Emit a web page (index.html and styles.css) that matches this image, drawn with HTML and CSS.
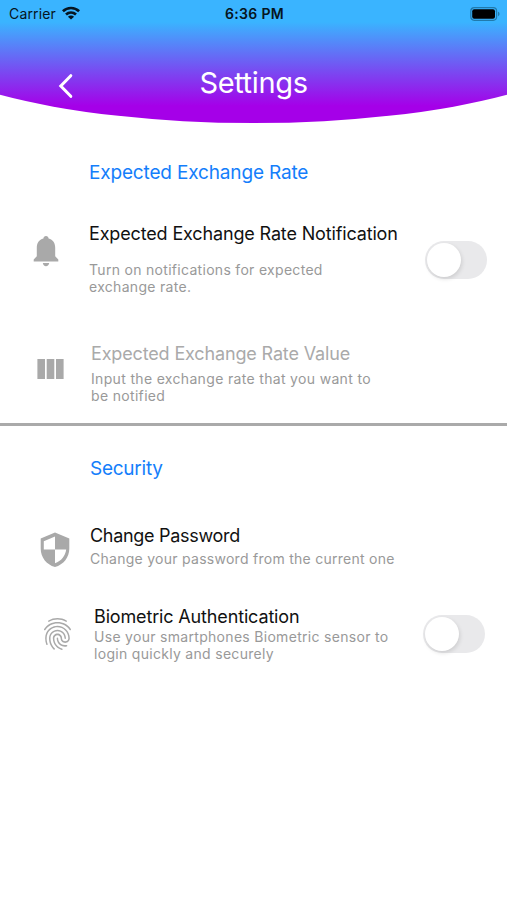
FILE: index.html
```html
<!DOCTYPE html>
<html lang="en">
<head>
<meta charset="utf-8">
<title>Settings</title>
<link rel="stylesheet" href="styles.css">
</head>
<body>
<header class="header">
  <div class="status">
    <div class="carrier"><span class="carrier-name">Carrier</span>
      <svg class="wifi" width="18" height="14" viewBox="0 0 18 14" fill="none" stroke="#061521" stroke-width="2.7"><path d="M.9 5.200C5.400.9 12.600.9 17.100 5.200M4 8.500c2.900-2.600 7.100-2.600 10 0"/><path d="M9 13.500 5.900 10.700c1.700-1.500 4.500-1.500 6.200 0z" fill="#061521" stroke="none"/></svg>
    </div>
    <span class="time">6:36 PM</span>
    <svg class="battery" width="30" height="14" viewBox="0 0 30 14"><rect x=".8" y=".7" width="25.8" height="12.6" rx="3.5" fill="none" stroke="#217aac" stroke-width="1.2"/><rect x="2.2" y="2.200" width="22.800" height="9.600" rx="2" fill="#000"/><path d="M28 4.800c2 .6 2 3.800 0 4.400z" fill="#217aac"/></svg>
  </div>
  <div class="titlebar">
    <svg class="back" width="16" height="26" viewBox="0 0 16 26" fill="none" stroke="#fff" stroke-width="3" stroke-linecap="round" stroke-linejoin="miter"><path d="M13.800 2.700 3.800 13l10 10.300"/></svg>
    <h1 class="title">Settings</h1>
  </div>
</header>
<main>
  <section class="rates">
    <h2 class="heading heading-rates">Expected Exchange Rate</h2>
    <div class="row notify">
      <svg class="icon bell" width="26" height="31" viewBox="0 0 26 31"><path d="M13 0c-1.500 0-2.500 1-2.600 2.500C6 3.600 3.800 7.200 3.800 11.800v8.400L.7 23.400v2.200h24.600v-2.200l-3.100-3.200v-8.400c0-4.600-2.200-8.200-6.600-9.300C15.500 1 14.500 0 13 0zM9.800 27h6.400c-.2 2-1.500 3.200-3.200 3.200S10 29 9.800 27z"/></svg>
      <div class="copy"><h3 class="label">Expected Exchange Rate Notification</h3><p class="sub">Turn on notifications for expected<br>exchange rate.</p></div>
      <span class="toggle"></span>
    </div>
    <div class="row value">
      <svg class="icon columns" width="27" height="20" viewBox="0 0 27 20"><path d="M.4 0h7.600v20H.4zM9.700 0h7.600v20H9.700zM19 0h7.600v20H19z"/></svg>
      <div class="copy"><h3 class="label">Expected Exchange Rate Value</h3><p class="sub">Input the exchange rate that you want to<br>be notified</p></div>
    </div>
  </section>
  <section class="security">
    <h2 class="heading heading-security">Security</h2>
    <div class="row password">
      <svg class="icon shield" width="30" height="36" viewBox="0 0 30 36"><path fill-rule="evenodd" d="M15 .5 29.300 6.500v10.200c0 8.500-5.700 15.800-14.300 18.300C6.400 32.500.700 25.200.700 16.700V6.500zM15 4.500 3.800 9.200v8.300H15zM15 17.500v13.800c6.200-2.200 10.400-7.500 11.200-13.800z"/></svg>
      <div class="copy"><h3 class="label">Change Password</h3><p class="sub">Change your password from the current one</p></div>
    </div>
    <div class="row biometric">
      <svg class="icon finger" width="27" height="32" viewBox="3 2 18 20" preserveAspectRatio="none"><path d="M17.810 4.470c-.080 0-.160-.020-.230-.060C15.660 3.420 14 3 12.010 3c-1.980 0-3.860.470-5.570 1.410-.240.130-.540.040-.680-.200-.130-.240-.040-.550.200-.680C7.820 2.520 9.860 2 12.010 2c2.130 0 3.990.470 6.030 1.520.250.130.340.430.210.670-.090.180-.260.280-.440.280zM3.500 9.720c-.100 0-.200-.030-.290-.090-.230-.160-.280-.470-.120-.700.990-1.400 2.250-2.500 3.750-3.270C9.980 4.040 14 4.030 17.150 5.650c1.500.770 2.760 1.860 3.750 3.250.160.220.110.540-.120.700-.230.160-.540.110-.700-.120-.900-1.260-2.040-2.250-3.390-2.940-2.870-1.470-6.540-1.470-9.400.010-1.360.700-2.500 1.700-3.400 2.960-.080.140-.230.210-.390.210zm6.250 12.070c-.130 0-.260-.050-.350-.150-.870-.870-1.340-1.430-2.010-2.640-.690-1.230-1.050-2.730-1.050-4.340 0-2.970 2.540-5.390 5.660-5.390s5.660 2.420 5.660 5.390c0 .280-.220.500-.500.500s-.500-.220-.500-.500c0-2.420-2.090-4.390-4.660-4.390-2.570 0-4.660 1.970-4.660 4.390 0 1.440.320 2.770.930 3.850.640 1.150 1.080 1.640 1.850 2.420.190.200.190.510 0 .710-.110.100-.240.150-.370.150zm7.170-1.850c-1.190 0-2.240-.300-3.100-.890-1.490-1.010-2.380-2.650-2.380-4.390 0-.280.220-.500.500-.500s.500.220.500.500c0 1.410.720 2.740 1.940 3.560.710.480 1.540.710 2.540.710.240 0 .640-.030 1.040-.100.270-.050.530.130.580.410.050.270-.130.530-.410.580-.570.110-1.070.120-1.210.120zM14.910 22c-.040 0-.090-.010-.130-.020-1.590-.440-2.630-1.030-3.720-2.100-1.400-1.390-2.170-3.240-2.170-5.220 0-1.620 1.380-2.940 3.080-2.940 1.700 0 3.080 1.320 3.080 2.940 0 1.070.930 1.940 2.080 1.940s2.080-.870 2.080-1.940c0-3.770-3.250-6.830-7.250-6.830-2.840 0-5.440 1.580-6.610 4.030-.390.810-.590 1.760-.590 2.800 0 .780.070 2.010.670 3.610.100.260-.030.550-.290.640-.260.100-.550-.040-.640-.290-.490-1.310-.730-2.610-.730-3.960 0-1.200.230-2.290.680-3.240 1.330-2.790 4.280-4.600 7.510-4.600 4.550 0 8.250 3.510 8.250 7.830 0 1.620-1.380 2.940-3.080 2.940s-3.080-1.320-3.080-2.940c0-1.070-.930-1.940-2.080-1.940s-2.080.870-2.080 1.940c0 1.710.660 3.310 1.870 4.510.950.940 1.860 1.460 3.270 1.850.270.070.420.350.350.610-.050.230-.260.380-.470.380z"/></svg>
      <div class="copy"><h3 class="label">Biometric Authentication</h3><p class="sub">Use your smartphones Biometric sensor to<br>login quickly and securely</p></div>
      <span class="toggle"></span>
    </div>
  </section>
</main>
</body>
</html>
```
FILE: styles.css
```css
* { box-sizing: border-box; margin: 0; padding: 0; }
body { height: 900px; overflow: hidden; background: #fff; font-family: Inter, "Liberation Sans", sans-serif; color: #111; }
h1, h2, h3 { font-weight: 400; white-space: nowrap; }
svg { display: block; }

.header { height: 123px; background: linear-gradient(#3ab4ff 0 22px, #a500e8 106px); clip-path: ellipse(360px 97px at 50% 26px); }
.status { display: grid; grid-template-columns: 1fr auto 1fr; height: 27px; padding: 0 7px 0 9px; align-items: center; color: #061521; }
.carrier { display: flex; gap: 6px; align-items: center; }
.carrier-name { font-size: 14px; letter-spacing: 0.15px; }
.wifi { margin-top: -2px; }
.time { font-size: 14px; font-weight: 600; letter-spacing: 0.35px; }
.battery { justify-self: end; }
.titlebar { display: grid; grid-template-columns: 57px 1fr 57px; align-items: center; height: 60px; margin-top: 26px; }
.back { grid-column: 2; grid-row: 1; margin-top: 6px; }
.title { grid-column: 2; grid-row: 1; justify-self: center; font-size: 29px; line-height: 36px; letter-spacing: -0.35px; color: #fff; }

.heading { font-size: 19px; line-height: 24px; letter-spacing: -0.16px; color: #147efb; }
.heading-rates { padding: 38px 0 0 89px; }
.heading-security { padding: 31px 0 0 90px; letter-spacing: -0.25px; }
.rates { height: 303px; border-bottom: 3px solid #aaa; }

.row { display: grid; align-items: start; }
.icon { fill: #a9a9a9; }
.label { font-size: 18px; line-height: 24px; letter-spacing: -0.15px; }
.sub { font-size: 14px; line-height: 17px; letter-spacing: 0.3px; color: #999; white-space: nowrap; }
.toggle { width: 62px; height: 38px; padding: 2px; border-radius: 19px; background: #e9e9eb; }
.toggle::before { content: ""; display: block; width: 34px; height: 34px; border-radius: 50%; background: #fff; box-shadow: 1px 2px 4px rgba(0, 0, 0, 0.12); }

.notify { grid-template-columns: 56px 336px 62px; padding: 37px 0 0 33px; }
.notify .icon { margin-top: 14px; }
.notify .sub { margin-top: 15px; }
.notify .toggle { margin-top: 19px; }
.value { grid-template-columns: 54px 1fr; padding: 47px 0 0 37px; }
.value .icon { margin-top: 17px; }
.value .label { color: #aaa; }
.value .sub { margin-top: 4px; letter-spacing: 0.33px; }
.password { grid-template-columns: 50px 1fr; padding: 43px 0 0 40px; }
.password .icon { margin-top: 8px; }
.password .label { letter-spacing: -0.3px; }
.password .sub { margin-top: 2px; letter-spacing: 0.27px; }
.biometric { grid-template-columns: 50px 329px 62px; padding: 37px 0 0 44px; }
.biometric .icon { margin-top: 13px; }
.biometric .sub { margin-top: -1px; }
.biometric .toggle { margin-top: 10px; }
```
